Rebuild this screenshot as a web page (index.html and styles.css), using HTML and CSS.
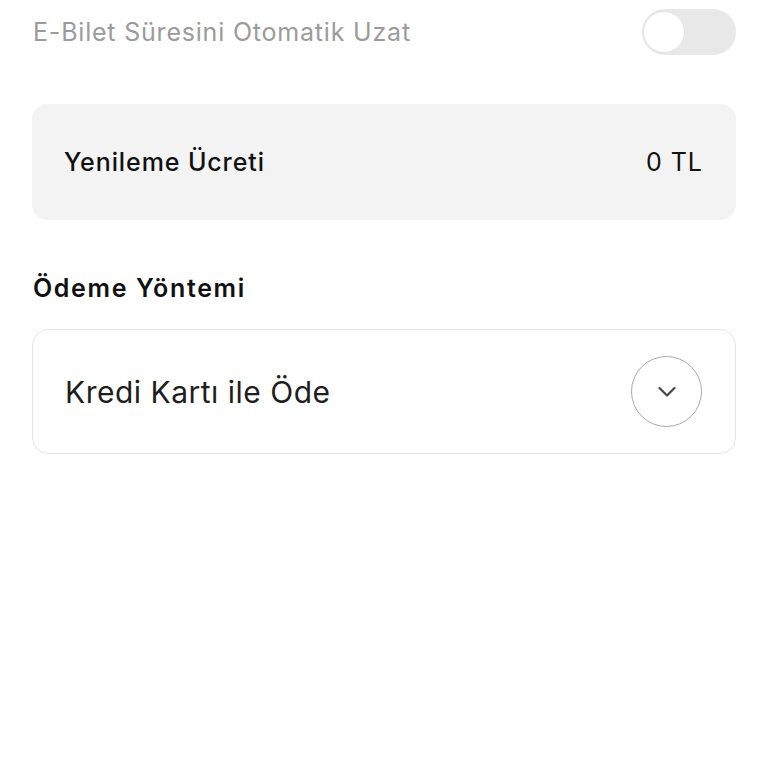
FILE: index.html
```
<!DOCTYPE html>
<html lang="tr">
<head>
<meta charset="utf-8">
<link rel="stylesheet" href="styles.css">
</head>
<body>
<div class="page">
  <div class="toggle-row">
    <span class="toggle-label">E-Bilet Süresini Otomatik Uzat</span>
    <span class="switch"><span class="knob"></span></span>
  </div>
  <div class="fee-card">
    <span class="fee-label">Yenileme Ücreti</span>
    <span class="fee-value">0 TL</span>
  </div>
  <h2 class="section-title">Ödeme Yöntemi</h2>
  <div class="select-card">
    <span class="select-label">Kredi Kartı ile Öde</span>
    <span class="chev">
      <svg width="18" height="12" viewBox="0 0 18 12"><path d="M1.5 2 L9 9.5 L16.5 2" fill="none" stroke="#474747" stroke-width="2.2" stroke-linecap="round" stroke-linejoin="round"/></svg>
    </span>
  </div>
</div>
</body>
</html>
```
FILE: styles.css
```
* { box-sizing: border-box; }
html, body { margin: 0; padding: 0; background: #fff; }
body { font-family: Inter, "Noto Sans", sans-serif; color: #111; }
.page { padding: 9px 32px 0 32px; display: flex; flex-direction: column; }
.toggle-row { display: flex; justify-content: space-between; align-items: center; height: 46px; }
.toggle-label { font-size: 25px; color: #9b9b9b; padding-left: 1px; letter-spacing: 0.8px; }
.switch { width: 94px; height: 46px; border-radius: 23px; background: #e8e8e8; display: flex; align-items: center; padding-left: 1px; }
.knob { width: 42px; height: 42px; border-radius: 50%; background: #fff; border: 1px solid #e4e4e4; }
.fee-card { margin-top: 49px; height: 116px; background: #f3f3f3; border-radius: 16px; display: flex; justify-content: space-between; align-items: center; padding: 0 33px 0 32px; }
.fee-label { font-size: 25px; font-weight: 500; color: #111; letter-spacing: 0.9px; }
.fee-value { font-size: 25px; font-weight: 400; color: #111; letter-spacing: 1px; }
.section-title { margin: 52px 0 0 0; font-size: 25px; font-weight: 600; color: #111; line-height: 32px; padding-left: 1px; letter-spacing: 1.65px; }
.select-card { margin-top: 25px; height: 125px; border: 1.5px solid #e6e6e6; border-radius: 16px; display: flex; justify-content: space-between; align-items: center; padding: 0 33px 0 32px; }
.select-label { font-size: 30px; color: #1e1e1e; letter-spacing: 0.5px; }
.chev { width: 71px; height: 71px; border-radius: 50%; border: 1.5px solid #aaaaaa; display: flex; align-items: center; justify-content: center; }
```
